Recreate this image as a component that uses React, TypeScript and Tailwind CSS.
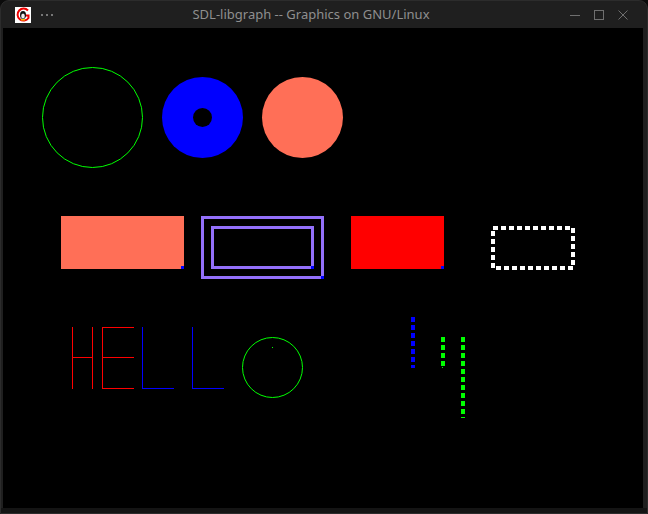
const dash = (x: number, y0: number, y1: number, w = 4) => {
  const out: { x: number; y: number; h: number }[] = [];
  for (let y = y0; y < y1; y += 8) out.push({ x, y, h: Math.min(5, y1 - y) });
  return out.map((d, i) => <rect key={`${x}-${i}`} x={d.x} y={d.y} width={w} height={d.h} />);
};

const AppIcon = () => (
  <svg width="16" height="16" viewBox="0 0 16 16">
    <rect width="16" height="16" fill="#fff" />
    <path d="M13 3.5 A6 6 0 1 0 13.5 11 L13.5 8.5 L9.5 8.5" fill="none" stroke="#e00" strokeWidth="2" />
    <ellipse cx="8" cy="8" rx="3" ry="4" fill="#111" />
    <ellipse cx="8" cy="9" rx="1.8" ry="2.6" fill="#eee" />
    <rect x="6" y="12" width="4" height="1.5" fill="#f5c400" />
  </svg>
);

const Canvas = () => (
  <svg width="640" height="480" viewBox="0 0 640 480" shapeRendering="crispEdges">
    <circle cx="89.5" cy="89.5" r="50" fill="none" stroke="#00ff00" strokeWidth="1" shapeRendering="auto" />
    <circle cx="199.5" cy="89.5" r="40.5" fill="#0000ff" shapeRendering="auto" />
    <circle cx="199.5" cy="89.5" r="9.5" fill="#000" shapeRendering="auto" />
    <circle cx="299.5" cy="89.5" r="40.5" fill="#ff6f57" shapeRendering="auto" />

    <rect x="58" y="188" width="123" height="53" fill="#ff6f57" />
    <rect x="178" y="238" width="3" height="3" fill="#0000ff" />

    <rect x="199.5" y="189.5" width="120" height="60" fill="none" stroke="#9370fa" strokeWidth="3" />
    <rect x="209.5" y="199.5" width="100" height="40" fill="none" stroke="#9370fa" strokeWidth="3" />
    <rect x="318" y="248" width="3" height="3" fill="#0000ff" />
    <rect x="308" y="238" width="3" height="3" fill="#0000ff" />

    <rect x="348" y="188" width="93" height="53" fill="#ff0000" />
    <rect x="438" y="238" width="3" height="3" fill="#0000ff" />

    <rect x="490" y="200" width="80" height="40" fill="none" stroke="#fff" strokeWidth="4" strokeDasharray="5 3" />

    <g stroke="#ff0000" strokeWidth="1">
      <line x1="69.5" y1="299" x2="69.5" y2="361" />
      <line x1="89.5" y1="299" x2="89.5" y2="361" />
      <line x1="69" y1="329.5" x2="90" y2="329.5" />
      <line x1="99.5" y1="299" x2="99.5" y2="361" />
      <line x1="99" y1="299.5" x2="131" y2="299.5" />
      <line x1="99" y1="329.5" x2="131" y2="329.5" />
      <line x1="99" y1="360.5" x2="131" y2="360.5" />
    </g>
    <g stroke="#0000ff" strokeWidth="1">
      <line x1="139.5" y1="299" x2="139.5" y2="361" />
      <line x1="139" y1="360.5" x2="171" y2="360.5" />
      <line x1="189.5" y1="299" x2="189.5" y2="361" />
      <line x1="189" y1="360.5" x2="221" y2="360.5" />
    </g>
    <circle cx="269.5" cy="339.5" r="30" fill="none" stroke="#00ff00" strokeWidth="1" shapeRendering="auto" />
    <rect x="269" y="319" width="1" height="1" fill="#00ff00" />

    <g fill="#0000ff">{dash(408, 289, 340)}</g>
    <g fill="#00ff00">
      {dash(438, 309, 338)}
      <rect x="439" y="339" width="1" height="1" />
      {dash(458, 309, 386)}
      <rect x="458" y="389" width="4" height="1" />
    </g>
  </svg>
);

export default function App() {
  return (
    <div className="w-[648px] h-[514px] bg-[#0b0b0b] overflow-hidden">
      <div className="w-full h-full bg-[#1f1f1f] rounded-t-[9px] border border-[#2c2c2c] flex flex-col">
        <div className="h-[27px] relative flex items-center shrink-0">
          <div className="ml-[14px] mt-[1px]">
            <AppIcon />
          </div>
          <div className="ml-[10px] flex gap-[3px] mt-[1px]">
            <span className="w-[2px] h-[2px] bg-[#777]" />
            <span className="w-[2px] h-[2px] bg-[#777]" />
            <span className="w-[2px] h-[2px] bg-[#777]" />
          </div>
          <div className="absolute inset-x-0 top-0 h-full flex items-center justify-center pointer-events-none">
            <span
              className="text-[13px] text-[#8f8f8f] ml-[-26px]"
              style={{ fontFamily: '"Noto Sans", sans-serif' }}
            >
              SDL-libgraph -- Graphics on GNU/Linux
            </span>
          </div>
          <div className="ml-auto mr-[18px] flex items-center gap-[12px] text-[#6f6f6f]">
            <svg width="12" height="12" viewBox="0 0 12 12">
              <line x1="1" y1="6.5" x2="11" y2="6.5" stroke="currentColor" strokeWidth="1" />
            </svg>
            <svg width="12" height="12" viewBox="0 0 12 12">
              <rect x="1.5" y="1.5" width="9" height="9" fill="none" stroke="currentColor" strokeWidth="1" />
            </svg>
            <svg width="12" height="12" viewBox="0 0 12 12">
              <path d="M1.5 1.5 L10.5 10.5 M10.5 1.5 L1.5 10.5" stroke="currentColor" strokeWidth="1" />
            </svg>
          </div>
        </div>
        <div className="ml-[2px] w-[640px] h-[480px] bg-black">
          <Canvas />
        </div>
        <div className="flex-1 bg-[#141414]" />
      </div>
    </div>
  );
}
